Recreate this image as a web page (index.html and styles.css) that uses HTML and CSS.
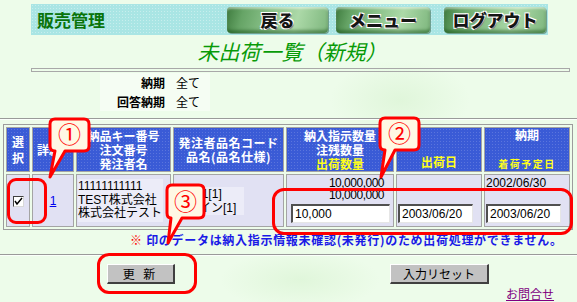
FILE: index.html
```html
<!DOCTYPE html>
<html lang="ja">
<head>
  <meta charset="UTF-8">
  <title>未出荷一覧（新規）</title>
  <link rel="stylesheet" href="styles.css">
</head>
<body>
  <div class="page">
    <div class="topbar">
      <span class="sys">販売管理</span>
      <div class="navbtns">
        <span class="nb nb-back">戻る</span>
        <span class="nb nb-menu">メニュー</span>
        <span class="nb nb-out">ログアウト</span>
      </div>
    </div>
    <h1 class="title">未出荷一覧（新規）</h1>
    <div class="emptybox"></div>
    <table class="cond">
      <tr><th>納期</th><td>全て</td></tr>
      <tr><th>回答納期</th><td>全て</td></tr>
    </table>
    <div class="rule"></div>

    <table class="list">
      <tr>
        <th class="c1">選<br>択</th>
        <th class="c2">詳細</th>
        <th class="c3">納品キー番号<br>注文番号<br>発注者名</th>
        <th class="c4">発注者品名コード<br>品名(品名仕様)</th>
        <th class="c5">納入指示数量<br>注残数量<br><span class="yel">出荷数量</span></th>
        <th class="c6"><span class="yel">出荷日</span></th>
        <th class="c7">納期<br><br><span class="yel small">着荷予定日</span></th>
      </tr>
      <tr>
        <td class="mid"><span class="chk"><svg width="9" height="9" viewBox="0 0 9 9"><path d="M1 4 L3 7 L8 1" fill="none" stroke="#000" stroke-width="1.4"/></svg></span></td>
        <td class="mid"><a href="#" class="lnk">1</a></td>
        <td class="mid left"><div class="cellbox">11111111111<br>TEST株式会社<br>株式会社テスト</div></td>
        <td class="mid left"><div class="cellbox2">00001[1]<br>デザイン[1]</div></td>
        <td class="top right">
          <div class="num">10,000,000</div>
          <div class="num">10,000,000</div>
          <input class="inp inp-qty" type="text" value="10,000">
        </td>
        <td class="bottom"><input class="inp inp-date" type="text" value="2003/06/20"></td>
        <td class="top left">
          <div class="date">2002/06/30</div>
          <div class="date">&nbsp;</div>
          <input class="inp inp-date2" type="text" value="2003/06/20">
        </td>
      </tr>
    </table>

    <p class="note"><span class="mark">※</span> 印のデータは納入指示情報未確認(未発行)のため出荷処理ができません。</p>
    <div class="rule rule2"></div>
    <div class="actions">
      <button class="btn btn-update">更 新</button>
      <button class="btn btn-reset">入力リセット</button>
    </div>
    <div class="footer"><a href="#">お問合せ</a></div>

    <!-- highlight frames -->
    <div class="hl hl-chk"></div>
    <div class="hl hl-inputs"></div>
    <div class="hl hl-update"></div>

    <!-- numbered callouts -->
    <svg class="callout co1" width="44" height="64" viewBox="0 0 44 64">
      <path d="M7 2 H36 Q41 2 41 7 V29 Q41 34 36 34 H17 L2 60 L7 34 Q2 34 2 29 V7 Q2 2 7 2 Z" fill="#fff8e4" stroke="#ff0000" stroke-width="3" stroke-linejoin="round"/>
      <text x="21.5" y="26" text-anchor="middle">①</text>
    </svg>
    <svg class="callout co2" width="44" height="64" viewBox="0 0 44 64">
      <path d="M7 2 H36 Q41 2 41 7 V29 Q41 34 36 34 H17 L3 61 L7 34 Q2 34 2 29 V7 Q2 2 7 2 Z" fill="#fff8e4" stroke="#ff0000" stroke-width="3" stroke-linejoin="round"/>
      <text x="21.5" y="26" text-anchor="middle">②</text>
    </svg>
    <svg class="callout co3" width="44" height="64" viewBox="0 0 44 64">
      <path d="M7 2 H34 Q39 2 39 7 V30 Q39 35 34 35 H17 L3 60 L6 35 Q2 35 2 30 V7 Q2 2 7 2 Z" fill="#fff8e4" stroke="#ff0000" stroke-width="3" stroke-linejoin="round"/>
      <text x="20.5" y="27" text-anchor="middle">③</text>
    </svg>
  </div>
</body>
</html>
```

FILE: styles.css
```css
body {
  margin: 0;
  background-color: #edfcea;
  font-family: "Liberation Sans", "Noto Sans CJK JP", sans-serif;
  font-size: 12px;
  color: #000;
}
.page {
  position: relative;
  width: 577px;
  height: 302px;
  overflow: hidden;
  background-image:
    radial-gradient(ellipse 60px 30px at 90px 160px, rgba(200,235,190,0.35), transparent),
    radial-gradient(ellipse 70px 40px at 400px 100px, rgba(200,235,190,0.35), transparent),
    radial-gradient(ellipse 80px 30px at 300px 280px, rgba(200,235,190,0.35), transparent);
}

/* top bar */
.topbar {
  display: flex;
  align-items: center;
  margin: 4px 0 0 31px;
  width: 517px;
  height: 31px;
  background-color: #a9e5e4;
  background-image: radial-gradient(rgba(255,255,255,0.35) 1px, transparent 1px);
  background-size: 3px 3px;
}
.sys {
  padding-left: 6px;
  font-family: "Noto Sans CJK JP", sans-serif;
  font-size: 17px;
  font-weight: bold;
  color: #0a740a;
}
.navbtns {
  display: flex;
  margin-left: auto;
  padding-right: 2px;
}
.nb {
  display: block;
  height: 26px;
  line-height: 25px;
  margin-left: 8px;
  text-align: center;
  font-family: "Noto Sans CJK JP", sans-serif;
  font-size: 17px;
  font-weight: 900;
  color: #151515;
  background: linear-gradient(105deg, #3f7c3f 0%, #66a466 16%, #8ac28a 42%, #acd9a8 68%, #7db67d 100%);
  border-radius: 4px;
  box-shadow: inset 0 -3px 3px rgba(0,60,0,0.4), inset 0 2px 2px rgba(255,255,255,0.45), 1px 1px 0 #6f9f8f;
  text-shadow: -1px -1px 0 #fff, 1px -1px 0 #fff, -1px 1px 0 #fff, 1px 1px 0 #888;
}
.nb-back { width: 101px; }
.nb-menu { width: 94px; }
.nb-out { width: 102px; margin-left: 14px; }

.title {
  margin: 1px 0 0;
  height: 30px;
  line-height: 30px;
  padding-left: 7px;
  text-align: center;
  font-family: "Noto Sans CJK JP", sans-serif;
  font-size: 21px;
  font-weight: normal;
  font-style: italic;
  color: #079a07;
}
.emptybox {
  margin: 2px 0 0 31px;
  width: 539px;
  height: 4px;
  box-sizing: border-box;
  border: 1px solid #a8a8a8;
}

/* conditions */
.cond {
  margin: 1px 0 0 100px;
  border-collapse: collapse;
  background: rgba(255,255,255,0.45);
}
.cond th,
.cond td {
  height: 19px;
  padding: 0;
  font-family: "Noto Sans CJK JP", sans-serif;
  font-size: 12px;
}
.cond th {
  width: 65px;
  padding-right: 5px;
  text-align: right;
}
.cond td {
  width: 34px;
  padding-left: 6px;
  font-weight: normal;
}

.rule {
  margin-top: 7px;
  height: 0;
  border-top: 1px solid #9a9a9a;
  border-bottom: 1px solid #fbfffb;
}

/* list */
.list {
  margin: 4px 0 0 3px;
  border: 1px solid #9c9c9c;
  border-collapse: separate;
  border-spacing: 2px;
}
.list th,
.list td {
  padding: 0;
  border: 1px solid #a4a4a4;
  box-sizing: border-box;
}
.list th {
  height: 44px;
  color: #fff;
  font-family: "Noto Sans CJK JP", sans-serif;
  font-size: 12px;
  font-weight: bold;
  line-height: 14px;
  text-align: center;
  background-color: #3a5bd6;
  background-image: radial-gradient(rgba(255,255,255,0.16) 1px, transparent 1px);
  background-size: 3px 3px;
}
.list th.c1 { width: 24px; line-height: 16px; }
.list th.c2 { width: 42px; text-align: left; padding-left: 4px; }
.list th.c3 { width: 95px; }
.list th.c4 { width: 111px; letter-spacing: 0.5px; }
.list th.c5 { width: 108px; }
.list th.c6 { width: 86px; vertical-align: bottom; padding-bottom: 2px; }
.list th.c7 { width: 86px; }
.yel { color: #ffff1a; }
.small { font-size: 10px; letter-spacing: 1.5px; }

.list td {
  height: 53px;
  background: #e1e1f3;
  font-size: 12px;
  font-family: "Liberation Sans", "Noto Sans CJK JP", sans-serif;
}
.mid { vertical-align: middle; text-align: center; }
.top { vertical-align: top; }
.bottom { vertical-align: bottom; text-align: center; padding-bottom: 3px !important; }
.left { text-align: left; }
.right { text-align: right; }

.chk {
  display: inline-block;
  width: 11px;
  height: 11px;
  box-sizing: border-box;
  border-top: 1px solid #404040;
  border-left: 1px solid #404040;
  border-right: 1px solid #d8d8d8;
  border-bottom: 1px solid #d8d8d8;
  background: #fff;
  line-height: 0;
  vertical-align: middle;
}
.lnk { color: #0000ee; }

.cellbox {
  margin-left: 1px;
  width: 85px;
  padding: 1px 0;
  line-height: 13.5px;
  background: #ececf8;
}
.cellbox2 {
  display: inline-block;
  margin-left: 1px;
  padding-right: 8px;
  line-height: 14px;
  background: #ececf8;
}
.num {
  height: 12px;
  line-height: 12px;
  padding-right: 9px;
  letter-spacing: -0.5px;
}
.num:first-child { margin-top: 2px; }
.date {
  height: 12px;
  line-height: 12px;
  padding-left: 1px;
}
.date:first-child { margin-top: 2px; }

.inp {
  display: block;
  height: 19px;
  box-sizing: border-box;
  padding: 0 2px;
  border-top: 2px solid #505050;
  border-left: 2px solid #505050;
  border-right: 1px solid #e6e6e6;
  border-bottom: 1px solid #e6e6e6;
  background: #fff;
  font-family: "Liberation Sans", sans-serif;
  font-size: 12px;
  color: #000;
  text-align: left;
}
.inp-qty { width: 99px; margin: 3px 0 0 4px; }
.inp-date { width: 75px; margin-left: 1px; }
.inp-date2 { width: 75px; margin: 3px 0 0 1px; }

.note {
  margin: 3px 0 0;
  padding-left: 130px;
  height: 14px;
  line-height: 14px;
  font-family: "Noto Sans CJK JP", sans-serif;
  font-size: 12px;
  font-weight: bold;
  color: #1a1ae6;
  letter-spacing: 0.7px;
  white-space: nowrap;
}
.mark { color: #ff0000; }
.rule2 { margin-top: 7px; }

.actions {
  display: flex;
  margin-top: 8px;
  padding-left: 107px;
}
.btn {
  height: 20px;
  padding: 0;
  background: #c2c2c2;
  border-top: 1px solid #fff;
  border-left: 1px solid #fff;
  border-right: 2px solid #404040;
  border-bottom: 2px solid #404040;
  font-family: "Noto Sans CJK JP", sans-serif;
  font-size: 12px;
  color: #000;
}
.btn-update { width: 68px; letter-spacing: 3px; }
.btn-reset { width: 99px; margin-left: 215px; }

.footer {
  margin-top: 3px;
  padding-right: 23px;
  text-align: right;
  line-height: 13px;
}
.footer a {
  color: #800080;
  font-family: "Noto Sans CJK JP", sans-serif;
  font-size: 12px;
}

/* overlays */
.hl {
  position: absolute;
  box-sizing: border-box;
  border: 3px solid #ff0000;
  border-radius: 9px;
}
.hl-chk { left: 7px; top: 178px; width: 40px; height: 46px; }
.hl-inputs { left: 272px; top: 188px; width: 301px; height: 47px; border-radius: 12px; }
.hl-update { left: 97px; top: 253px; width: 100px; height: 41px; border-radius: 12px; }

.callout {
  position: absolute;
  overflow: visible;
}
.callout text {
  font-family: "Noto Sans CJK JP", sans-serif;
  font-size: 23px;
  fill: #ff0000;
}
.co1 { left: 48px; top: 117px; }
.co2 { left: 378px; top: 116px; }
.co3 { left: 165px; top: 183px; }
```
